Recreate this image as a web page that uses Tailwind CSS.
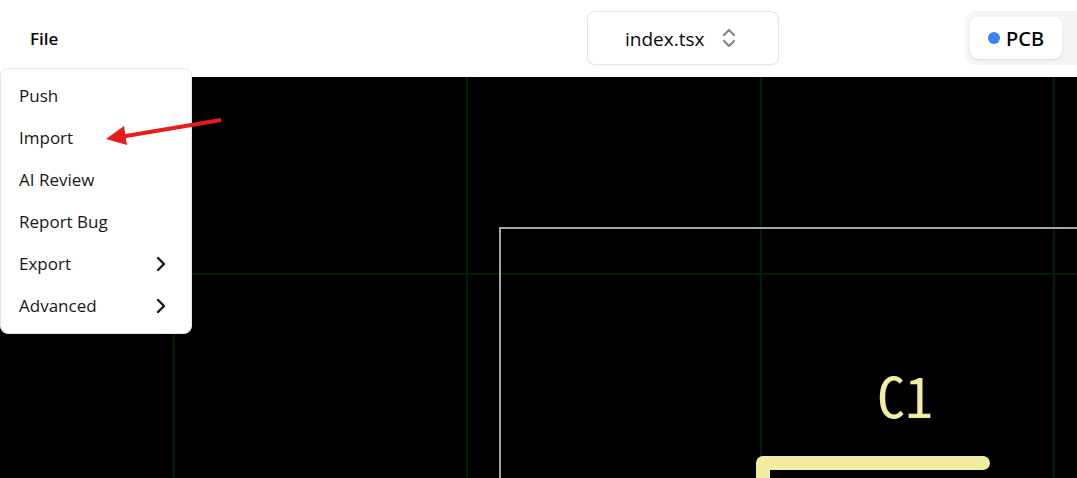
<!DOCTYPE html>
<html lang="en">
<head>
<meta charset="utf-8">
<title>PCB editor</title>
<script src="https://cdn.jsdelivr.net/npm/@tailwindcss/browser@4"></script>
</head>
<body class="flex min-h-screen flex-col overflow-hidden bg-black font-['Open_Sans',sans-serif] text-neutral-950">
  <header class="grid h-[77px] grid-cols-[1fr_192px_298px] items-center bg-white pb-px">
    <div class="relative">
      <button type="button" aria-haspopup="menu" aria-expanded="true" class="ml-[18px] rounded-md px-3 pt-2.5 pb-2 text-[17px] leading-6 font-semibold">File</button>
      <div role="menu" aria-label="File" class="absolute top-[51px] left-0 z-20 w-48 rounded-lg border border-neutral-200 bg-white py-1.5 text-[17px] text-neutral-900 shadow-md">
        <button type="button" role="menuitem" class="flex h-[42px] w-full items-center px-[18px]">Push</button>
        <button type="button" role="menuitem" class="flex h-[42px] w-full items-center px-[18px]">Import</button>
        <button type="button" role="menuitem" class="flex h-[42px] w-full items-center px-[18px]">AI Review</button>
        <button type="button" role="menuitem" class="flex h-[42px] w-full items-center px-[18px]">Report Bug</button>
        <button type="button" role="menuitem" aria-haspopup="menu" class="flex h-[42px] w-full items-center justify-between px-[18px]">Export
          <svg class="size-6" viewBox="0 0 24 24" fill="none" stroke="currentColor" stroke-width="2.4" stroke-linecap="round" stroke-linejoin="round"><path d="m9 18 6-6-6-6"/></svg>
        </button>
        <button type="button" role="menuitem" aria-haspopup="menu" class="flex h-[42px] w-full items-center justify-between px-[18px]">Advanced
          <svg class="size-6" viewBox="0 0 24 24" fill="none" stroke="currentColor" stroke-width="2.4" stroke-linecap="round" stroke-linejoin="round"><path d="m9 18 6-6-6-6"/></svg>
        </button>
      </div>
    </div>
    <div class="relative">
      <select aria-label="File name" class="block h-[54px] w-full appearance-none rounded-lg border border-neutral-200 bg-white pt-0.5 pl-[37px] text-[19px] shadow-xs"><option>index.tsx</option></select>
      <svg class="pointer-events-none absolute top-[15px] left-[130px] size-6" viewBox="0 0 24 24" fill="none" stroke="#858585" stroke-width="2.2" stroke-linecap="round" stroke-linejoin="round"><path d="m7 9 5-5 5 5M7 15l5 5 5-5"/></svg>
    </div>
    <div class="pl-[186px]">
      <div class="flex h-[54px] items-center rounded-l-xl bg-neutral-100 pl-[5px]">
        <button type="button" class="flex h-[42px] w-[92px] items-center gap-1.5 rounded-lg bg-white pl-[18px] font-['Noto_Sans',sans-serif] text-xl font-medium text-black shadow-sm"><span class="size-3 rounded-full bg-[#3b82f6]"></span><span class="pt-0.5">PCB</span></button>
      </div>
    </div>
  </header>
  <main class="relative min-h-[401px] flex-1 overflow-hidden bg-black">
    <svg class="absolute inset-0 h-full w-full" role="img" aria-label="Board view">
      <g stroke="#002000" stroke-width="2">
        <path d="M174 0V4000M467 0V4000M761 0V4000M1054 0V4000M0 197H4000"/>
      </g>
      <path d="M4000 151H500V4000" fill="none" stroke="#a6a6a6" stroke-width="2"/>
      <path d="M983 386H763V4000" fill="none" stroke="#f2eda1" stroke-width="14" stroke-linecap="round" stroke-linejoin="round"/>
      <text x="877" y="341" fill="#f2eda1" class="font-['Noto_Sans_Mono_CJK_JP','Liberation_Mono',monospace] text-[56px]">C1</text>
    </svg>
  </main>
  <svg class="pointer-events-none absolute top-[110px] left-[100px] z-30 h-10 w-32" viewBox="100 110 128 40" aria-hidden="true">
    <path d="M221 120 120 137" stroke="#e81c1c" stroke-width="4"/>
    <path d="M106 139 124 126 127 145Z" fill="#e81c1c"/>
  </svg>
</body>
</html>
